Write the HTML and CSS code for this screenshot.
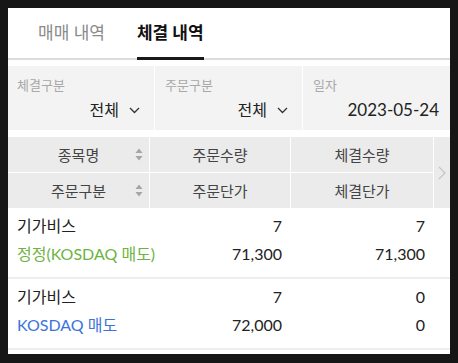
FILE: index.html
```html
<!DOCTYPE html>
<html lang="ko">
<head>
<meta charset="utf-8">
<link rel="stylesheet" href="styles.css">
</head>
<body>
<div class="panel">
  <div class="tabs">
    <div class="tab">매매 내역</div>
    <div class="tab active">체결 내역</div>
  </div>
  <div class="filters">
    <div class="filter">
      <div class="f-label">체결구분</div>
      <div class="f-value">전체 <svg class="caret" width="11" height="7" viewBox="0 0 11 7"><path d="M1 1l4.5 4.5L10 1" fill="none" stroke="#333" stroke-width="1.3"/></svg></div>
    </div>
    <div class="filter">
      <div class="f-label">주문구분</div>
      <div class="f-value">전체 <svg class="caret" width="11" height="7" viewBox="0 0 11 7"><path d="M1 1l4.5 4.5L10 1" fill="none" stroke="#333" stroke-width="1.3"/></svg></div>
    </div>
    <div class="filter">
      <div class="f-label">일자</div>
      <div class="f-value date">2023-05-24</div>
    </div>
  </div>
  <div class="thead">
    <div class="th sortable">종목명<svg class="sort" width="8" height="13" viewBox="0 0 8 13"><path d="M4 0.5L7.5 5H0.5z" fill="#a5a5a5"/><path d="M4 12.5L7.5 8H0.5z" fill="#a5a5a5"/></svg></div>
    <div class="th">주문수량</div>
    <div class="th">체결수량</div>
    <div class="th more"><svg width="8" height="14" viewBox="0 0 8 14"><path d="M1 1l6 6-6 6" fill="none" stroke="#c4c4c4" stroke-width="1.2"/></svg></div>
    <div class="th sortable">주문구분<svg class="sort" width="8" height="13" viewBox="0 0 8 13"><path d="M4 0.5L7.5 5H0.5z" fill="#a5a5a5"/><path d="M4 12.5L7.5 8H0.5z" fill="#a5a5a5"/></svg></div>
    <div class="th">주문단가</div>
    <div class="th">체결단가</div>
  </div>
  <div class="row">
    <div class="cell left"><div>기가비스</div><div class="green">정정(KOSDAQ 매도)</div></div>
    <div class="cell num"><div>7</div><div>71,300</div></div>
    <div class="cell num"><div>7</div><div>71,300</div></div>
    <div class="cell"></div>
  </div>
  <div class="row">
    <div class="cell left"><div>기가비스</div><div class="blue">KOSDAQ 매도</div></div>
    <div class="cell num"><div>7</div><div>72,000</div></div>
    <div class="cell num"><div>0</div><div>0</div></div>
    <div class="cell"></div>
  </div>
</div>
</body>
</html>
```
FILE: styles.css
```css
html, body {
  margin: 0;
  padding: 0;
}
body {
  background: #161616;
  padding: 8px;
  font-family: Lato, "Noto Sans CJK KR", sans-serif;
  color: #222;
}
.panel {
  width: 442px;
  height: 346px;
  background: #fff;
  overflow: hidden;
}
.tabs {
  display: flex;
  gap: 32px;
  padding-left: 30px;
  height: 50px;
  border-bottom: 2px solid #dcdcdc;
}
.tab {
  height: 49px;
  line-height: 49px;
  font-size: 17px;
  color: #8a8a8a;
  border-bottom: 3px solid transparent;
}
.tab.active {
  color: #111;
  font-weight: 700;
  border-bottom-color: #1a1a1a;
}
.filters {
  margin-top: 6px;
  display: grid;
  grid-template-columns: 146px 147px 147px;
  gap: 1px;
  height: 64px;
}
.filter {
  background: #f3f3f3;
  padding: 10px 12px 0 9px;
  display: flex;
  flex-direction: column;
}
.filter + .filter {
  padding-left: 10px;
}
.f-label {
  font-size: 13px;
  line-height: 19px;
  color: #a8a8a8;
}
.f-value {
  margin-top: 4px;
  font-size: 16px;
  line-height: 22px;
  color: #222;
  display: flex;
  justify-content: flex-end;
  align-items: center;
  gap: 10px;
}
.f-value.date {
  font-size: 17px;
  margin-right: -1px;
}
.caret {
  margin-right: 2px;
}
.thead {
  margin-top: 7px;
  display: grid;
  grid-template-columns: 141px 140px 142px 16px;
  grid-template-rows: 35px 35px;
  gap: 1px;
  background: #fff;
}
.th {
  background: #ebebeb;
  font-size: 15px;
  color: #444;
  display: flex;
  align-items: center;
  justify-content: center;
  position: relative;
}
.th .sort {
  position: absolute;
  right: 6px;
  top: 11px;
}
.th.more {
  grid-row: 1 / 3;
  grid-column: 4;
}
.row {
  display: grid;
  grid-template-columns: 141px 141px 143px 17px;
  padding: 4px 0 9px;
  border-bottom: 2px solid #eeeeee;
  font-size: 16px;
  line-height: 28px;
  color: #222;
}
.cell {
  white-space: nowrap;
}
.cell.left {
  padding-left: 9px;
}
.cell.num {
  text-align: right;
  padding-right: 8px;
}
.green {
  color: #6db33f;
}
.blue {
  color: #3b74d8;
}
```
